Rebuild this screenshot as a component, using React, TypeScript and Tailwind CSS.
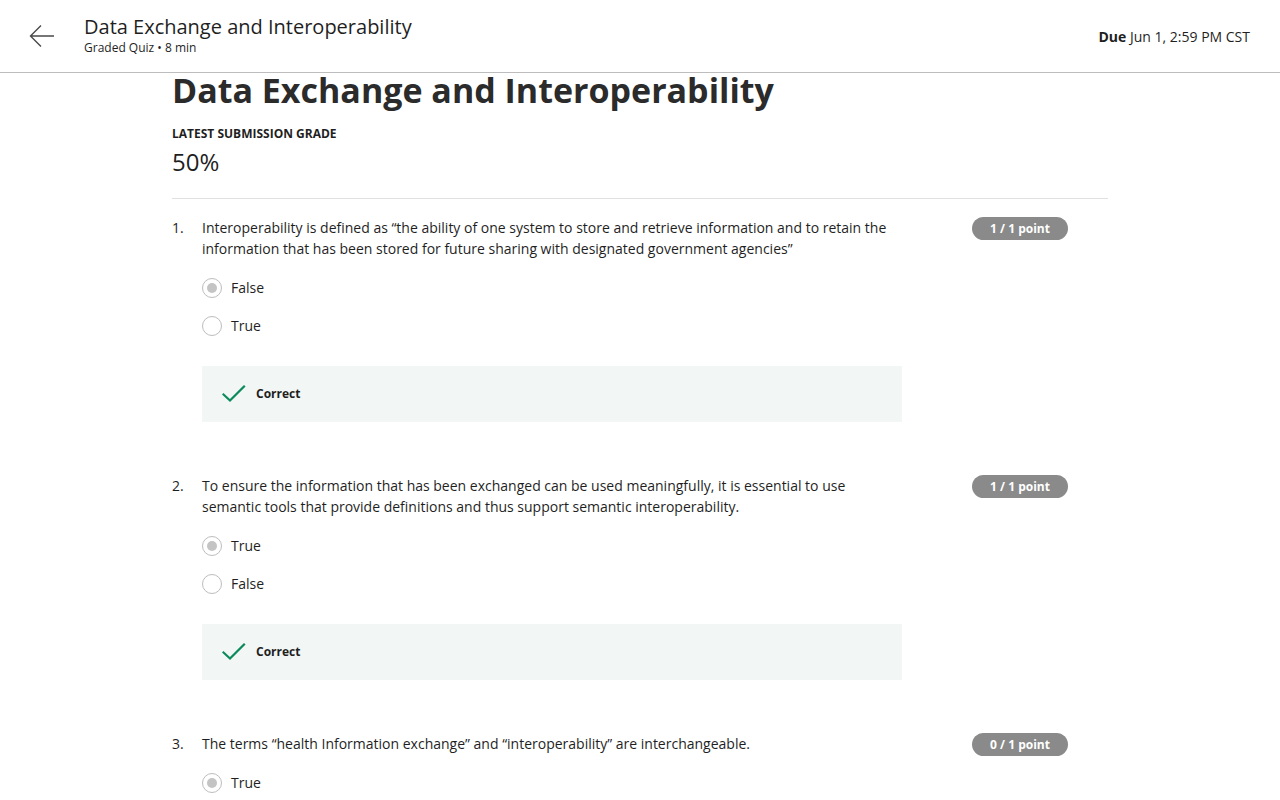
import React from "react";

const font = { fontFamily: '"Open Sans", "Noto Sans", sans-serif' };

function Radio({ checked }: { checked: boolean }) {
  return (
    <span className="w-[20px] h-[20px] rounded-full border-[1.5px] border-[#bdbdbd] flex items-center justify-center shrink-0 bg-white">
      {checked && <span className="w-[10px] h-[10px] rounded-full bg-[#c4c4c4]" />}
    </span>
  );
}

function Check() {
  return (
    <svg width="24" height="20" viewBox="0 0 24 20" fill="none">
      <path d="M1.5 10.5 L8 16.5 L22 2.5" stroke="#0b8a5b" strokeWidth="2.2" strokeLinecap="square" />
    </svg>
  );
}

type Q = {
  n: number;
  text: string;
  points: string;
  options: { label: string; checked: boolean }[];
  feedback?: boolean;
};

const questions: Q[] = [
  {
    n: 1,
    text: "Interoperability is defined as “the ability of one system to store and retrieve information and to retain the information that has been stored for future sharing with designated government agencies”",
    points: "1 / 1 point",
    options: [
      { label: "False", checked: true },
      { label: "True", checked: false },
    ],
    feedback: true,
  },
  {
    n: 2,
    text: "To ensure the information that has been exchanged can be used meaningfully, it is essential to use semantic tools that provide definitions and thus support semantic interoperability.",
    points: "1 / 1 point",
    options: [
      { label: "True", checked: true },
      { label: "False", checked: false },
    ],
    feedback: true,
  },
  {
    n: 3,
    text: "The terms “health Information exchange” and “interoperability” are interchangeable.",
    points: "0 / 1 point",
    options: [
      { label: "True", checked: true },
      { label: "False", checked: false },
    ],
  },
];

function Question({ q }: { q: Q }) {
  return (
    <div className="flex h-[258px]">
      <div className="w-[30px] shrink-0 text-[14px] leading-[21px] text-[#1f1f1f] pt-[7px]">{q.n}.</div>
      <div className="w-[706px] shrink-0">
        <p className="text-[14px] leading-[21px] text-[#1f1f1f] pt-[7px] pr-[6px]">{q.text}</p>
        <div className="mt-[18px] flex flex-col gap-[17px]">
          {q.options.map((o) => (
            <div key={o.label} className="flex items-center h-[21px]">
              <Radio checked={o.checked} />
              <span className="ml-[9px] text-[14px] text-[#1f1f1f]">{o.label}</span>
            </div>
          ))}
        </div>
        {q.feedback && (
          <div className="mt-[30px] w-[700px] h-[56px] bg-[#f2f7f5] flex items-center pl-[20px]">
            <Check />
            <span className="ml-[10px] text-[12px] font-bold text-[#1f1f1f]">Correct</span>
          </div>
        )}
      </div>
      <div className="flex-1 flex justify-end pr-[40px]">
        <div className="h-[23px] w-[96px] rounded-full bg-[#8a8a8a] text-white text-[12px] font-bold flex items-center justify-center mt-[7px]">
          {q.points}
        </div>
      </div>
    </div>
  );
}

export default function App() {
  return (
    <div style={font} className="w-[1280px] h-[800px] overflow-hidden bg-white text-[#1f1f1f]">
      <header className="h-[73px] border-b border-[#bdbdbd] flex items-center pl-[28px] pr-[30px]">
        <svg width="28" height="28" viewBox="0 0 28 28" fill="none" className="shrink-0">
          <path d="M26 14 H3 M13 3.5 L2.5 14 L13 24.5" stroke="#4a4a4a" strokeWidth="1.4" />
        </svg>
        <div className="ml-[28px] flex flex-col">
          <div className="text-[20px] leading-[26px] text-[#1f1f1f] mt-[-3px]">Data Exchange and Interoperability</div>
          <div className="text-[12px] leading-[16px] text-[#1f1f1f]">Graded Quiz • 8 min</div>
        </div>
        <div className="ml-auto text-[14px] text-[#1f1f1f]">
          <span className="font-bold">Due</span> Jun 1, 2:59 PM CST
        </div>
      </header>
      <main className="ml-[172px] w-[936px]">
        <h1 className="text-[34px] leading-[36px] font-bold text-[#2b2b2b] mt-[-1px]">
          Data Exchange and Interoperability
        </h1>
        <div className="mt-[18px] text-[12px] leading-[16px] font-bold uppercase text-[#1f1f1f]">
          Latest Submission Grade
        </div>
        <div className="mt-[4px] text-[24px] leading-[32px] text-[#1f1f1f]">50%</div>
        <div className="mt-[20px] border-t border-[#e0e0e0]" />
        <div className="mt-[11px]">
          {questions.map((q) => (
            <Question key={q.n} q={q} />
          ))}
        </div>
      </main>
    </div>
  );
}
